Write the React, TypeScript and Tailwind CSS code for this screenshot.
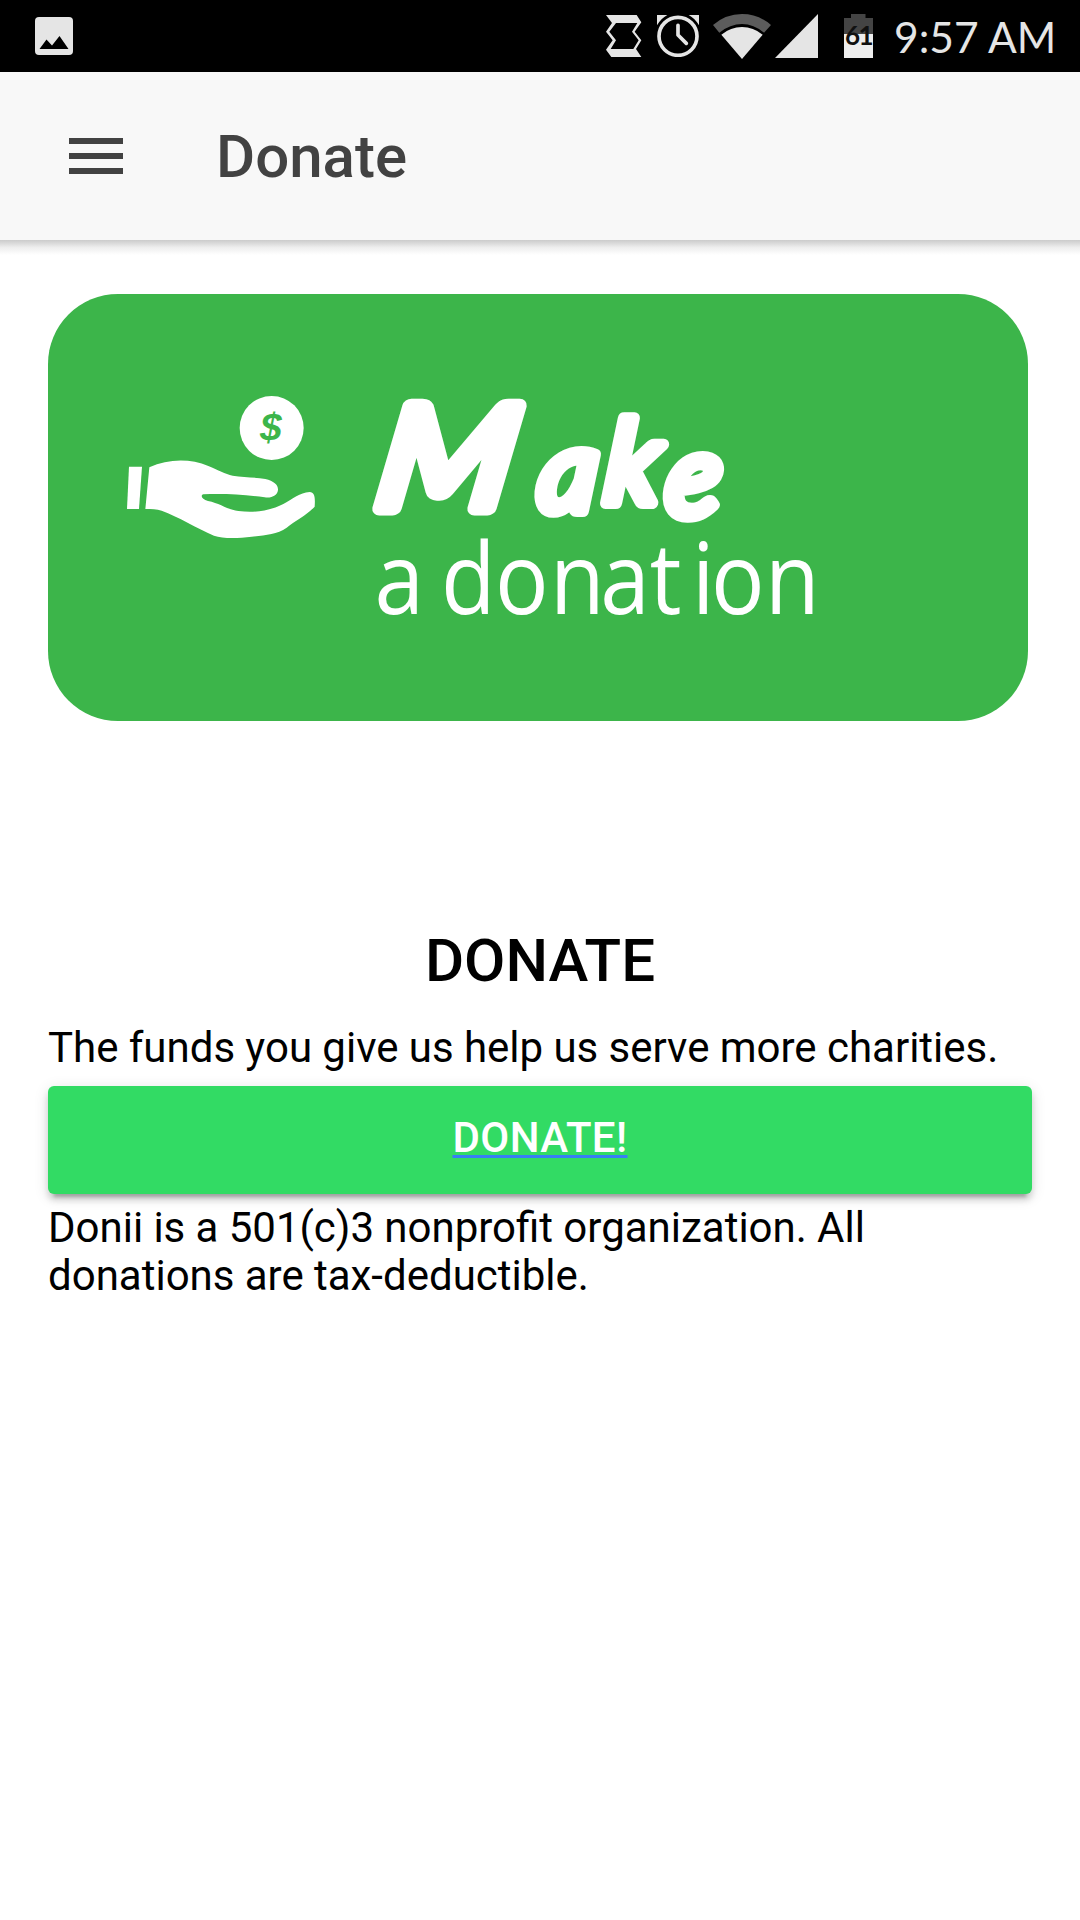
function StatusBar() {
  return (
    <div className="flex h-[72px] items-start bg-black text-[#e5e5e5]">
      <svg className="ml-[35px] mt-[17px] h-[38px] w-[38px]" viewBox="0 0 38 38" aria-hidden="true">
        <rect width="38" height="38" rx="4" fill="#e5e5e5" />
        <path d="M4.5 32 11.5 22.5 17 28.5 24.5 19 33.5 32z" fill="#000" />
      </svg>
      <svg className="ml-[533px] mt-[15px] h-[42px] w-[36px]" viewBox="0 0 108 126" aria-hidden="true">
        <path d="M0 0H92L106 22 86 50 106 76 90 102 106 126H16L0 104 20 76 0 50 18 24ZM30 24 10 50 30 76 14 102H82L98 76 78 50 94 24Z" fill="#e5e5e5" fillRule="evenodd" />
      </svg>
      <svg className="ml-[15px] mt-[15px] h-[42px] w-[42px]" viewBox="0 0 126 126" aria-hidden="true">
        <path d="M0 0H31Q12 10 0 31ZM95 0H126V31Q114 10 95 0Z" fill="#e5e5e5" />
        <circle cx="63" cy="64" r="57" fill="none" stroke="#e5e5e5" strokeWidth="11" />
        <path d="M63 31V60L88 85" fill="none" stroke="#e5e5e5" strokeWidth="11" strokeLinecap="round" strokeLinejoin="round" />
      </svg>
      <svg className="ml-[14px] mt-[14px] h-[45px] w-[58px]" viewBox="0 0 174 135" aria-hidden="true">
        <path d="M0 33Q38 0 87 0T174 33L153 56Q122 30 87 30T19 56Z" fill="#5c5c5c" />
        <path d="M25 62Q53 39 87 39T149 62L87 135Z" fill="#e5e5e5" />
      </svg>
      <svg className="ml-[4px] mt-[14px] h-[44px] w-[43px]" viewBox="0 0 43 44" aria-hidden="true">
        <path d="M43 0V44H0Z" fill="#e5e5e5" />
      </svg>
      <div className="relative ml-[26px] mt-[14px] h-[44px] w-[29px]">
        <svg className="h-[44px] w-[29px]" viewBox="0 0 29 44" aria-hidden="true">
          <path d="M7 0H21.500V4H29V20H0V4H7Z" fill="#444" />
          <path d="M0 20H29V44H0Z" fill="#eee" />
        </svg>
        <span className="absolute left-[1px] top-[8px] font-['Lato',sans-serif] text-[26px] font-bold leading-[26px] tracking-[-1.5px] text-[#111]">61</span>
      </div>
      <span className="ml-[21px] mt-[11px] whitespace-nowrap font-['Lato',sans-serif] text-[42.500px] leading-[52px]">9:57 AM</span>
    </div>
  );
}

function DonationBanner() {
  return (
    <div className="h-[427px] w-[980px] overflow-hidden rounded-[70px] bg-[#3cb54a]">
      <svg className="h-[427px] w-[980px]" viewBox="48 294 980 427" fill="#fff">
        <g transform="translate(110 380) scale(.33333)">
          <path d="M57 260H96L87 387H51Z" />
          <path d="M118 262C175 236 240 235 295 258C325 271 345 282 368 287C400 293 435 291 466 297C492 303 505 315 504 330C502 346 486 355 464 352C400 343 340 341 280 343C270 347 276 358 294 363C330 370 350 388 385 393C440 400 485 390 520 372C550 356 568 338 599 336C614 337 616 350 614 380C590 405 560 420 530 443C500 464 465 465 425 470C385 475 340 477 312 467C260 445 205 410 155 392C140 387 125 387 106 387Z" />
          <circle cx="485" cy="144" r="96" />
        </g>
        <text x="260" y="441" fontSize="39" className="font-['Liberation_Sans',sans-serif] font-bold italic" fill="#3cb54a">$</text>
        <g className="font-['Lato',sans-serif] font-normal italic" stroke="#fff" strokeLinejoin="round">
          <text transform="translate(373 508) skewX(-9) scale(1.1 1)" fontSize="142" strokeWidth="15">M</text>
          <text strokeWidth="12" transform="translate(536 511) skewX(-5)" x="0 66 128" y="0 -8 5" fontSize="115">ake</text>
        </g>
        <text transform="scale(.9 1)" y="614" x="416 465 490 550 611 667 722 769 790 850" fontSize="99" className="font-['Open_Sans',sans-serif] font-normal">a donation</text>
      </svg>
    </div>
  );
}

export default function App() {
  return (
    <div className="flex min-h-[1920px] w-[1080px] flex-col bg-white font-['Roboto',sans-serif] text-black">
      <StatusBar />
      <header className="flex h-[168px] items-center bg-[#f8f8f8] text-[#424242]">
        <button aria-label="Menu" className="ml-[69px] flex w-[54px] flex-col gap-[9px]">
          <span className="h-[6px] bg-[#424242]" />
          <span className="h-[6px] bg-[#424242]" />
          <span className="h-[6px] bg-[#424242]" />
        </button>
        <h1 className="ml-[93px] pt-[2px] text-[60px] font-medium leading-[72px]">Donate</h1>
      </header>
      <div className="h-[15px] bg-linear-to-b from-[#cbcbcb] via-[#eeeeee] to-white" />
      <main className="flex flex-col px-[48px] pt-[39px]">
        <DonationBanner />
        <h2 className="mt-[204px] text-center text-[60px] font-medium leading-[72px]">DONATE</h2>
        <p className="mt-[27px] text-[42px] leading-[48px] [word-spacing:-0.12px]">The funds you give us help us serve more charities.</p>
        <button className="mt-[14px] flex h-[108px] items-center justify-center rounded-[6px] bg-[#32db64] text-[42px] font-medium leading-[48px] text-white shadow-[0_6px_6px_0_rgba(0,0,0,0.14),0_9px_3px_-6px_rgba(0,0,0,0.2),0_3px_15px_0_rgba(0,0,0,0.12)]">
          <span className="mb-[4px] tracking-[0.400px] underline decoration-[#387ef5] decoration-[3px] underline-offset-[3px]">DONATE!</span>
        </button>
        <p className="mt-[10px] text-[42px] leading-[48px] [word-spacing:-0.15px]">Donii is a 501(c)3 nonprofit organization. All donations are tax-deductible.</p>
      </main>
    </div>
  );
}
